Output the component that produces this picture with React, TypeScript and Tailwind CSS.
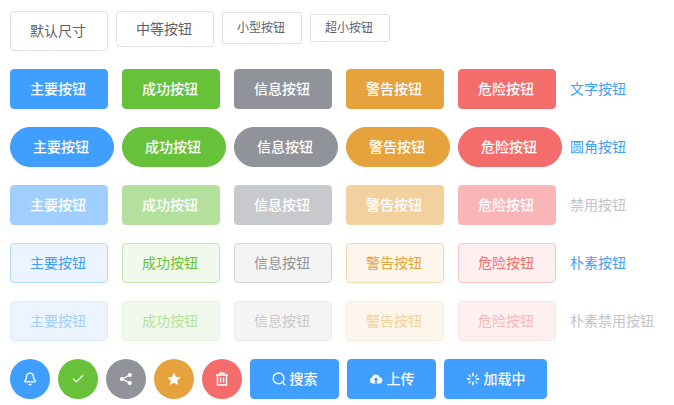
import { Bell, Check } from "lucide-react"

const font = "font-['Inter','Noto_Sans_CJK_SC',sans-serif]"
const base = "inline-flex items-center justify-center text-sm border"

const names = ["主要按钮", "成功按钮", "信息按钮", "警告按钮", "危险按钮"]

const solid = [
  "bg-[#409eff] border-[#409eff] text-white",
  "bg-[#67c23a] border-[#67c23a] text-white",
  "bg-[#909399] border-[#909399] text-white",
  "bg-[#e6a23c] border-[#e6a23c] text-white",
  "bg-[#f56c6c] border-[#f56c6c] text-white",
]
const disabled = [
  "bg-[#a0cfff] border-[#a0cfff] text-white",
  "bg-[#b3e19d] border-[#b3e19d] text-white",
  "bg-[#c8c9cc] border-[#c8c9cc] text-white",
  "bg-[#f3d19e] border-[#f3d19e] text-white",
  "bg-[#fab6b6] border-[#fab6b6] text-white",
]
const plain = [
  "bg-[#ecf5ff] border-[#b3d8ff] text-[#409eff]",
  "bg-[#f0f9eb] border-[#c2e7b0] text-[#67c23a]",
  "bg-[#f4f4f5] border-[#d3d4d6] text-[#909399]",
  "bg-[#fdf6ec] border-[#f5dab1] text-[#e6a23c]",
  "bg-[#fef0f0] border-[#fbc4c4] text-[#f56c6c]",
]
const plainDisabled = [
  "bg-[#ecf5ff] border-[#d9ecff] text-[#a0cfff]",
  "bg-[#f0f9eb] border-[#e1f3d8] text-[#b3e19d]",
  "bg-[#f4f4f5] border-[#e9e9eb] text-[#c8c9cc]",
  "bg-[#fdf6ec] border-[#faecd8] text-[#f3d19e]",
  "bg-[#fef0f0] border-[#fde2e2] text-[#fab6b6]",
]

function Row({ styles, shape, gap, link, linkColor, weight }: { styles: string[]; shape: string; gap: string; link: string; linkColor: string; weight: string }) {
  return (
    <div className={`flex h-10 items-center ${gap}`}>
      {styles.map((s, i) => (
        <button key={names[i]} className={`${base} ${s} ${shape} ${weight} pr-0.5`}>
          {names[i]}
        </button>
      ))}
      <span className={`text-sm ${linkColor}`}>{link}</span>
    </div>
  )
}

function ShareIcon() {
  return (
    <svg width="14" height="14" viewBox="0 0 14 14" fill="white" stroke="white">
      <path d="M10.5 3 3.5 7l7 4" fill="none" strokeWidth="1.3" />
      <circle cx="10.8" cy="3" r="2.1" stroke="none" />
      <circle cx="3" cy="7" r="2.1" stroke="none" />
      <circle cx="10.8" cy="11" r="2.1" stroke="none" />
    </svg>
  )
}

function StarIcon() {
  return (
    <svg width="14" height="14" viewBox="0 0 14 14" fill="white">
      <path d="M7 .6 9 4.8l4.6.6-3.4 3.1.9 4.6L7 10.8l-4.1 2.3.9-4.6L.4 5.4 5 4.8z" />
    </svg>
  )
}

function TrashIcon() {
  return (
    <svg width="14" height="14" viewBox="0 0 14 14" fill="none" stroke="white" strokeWidth="1.4">
      <path d="M1 3h12M5 3V1h4v2M2.5 3v10h9V3M5.5 5.5v5M8.5 5.5v5" />
    </svg>
  )
}

function SearchIcon() {
  return (
    <svg width="14" height="14" viewBox="0 0 14 14" fill="none" stroke="white" strokeWidth="1.3">
      <circle cx="6.6" cy="6.4" r="5.4" />
      <path d="m10.5 10.4 2.3 2.4" strokeLinecap="round" />
    </svg>
  )
}

function UploadIcon() {
  return (
    <svg width="14" height="14" viewBox="0 0 14 14">
      <path fill="white" d="M3.6 11.5A3 3 0 0 1 3.1 5.6 4 4 0 0 1 10.8 5.2 3.2 3.2 0 0 1 10.6 11.5z" />
      <path fill="#409eff" d="M7 5.2 9.6 8H7.9v3.5H6.1V8H4.4z" />
    </svg>
  )
}

function LoadingIcon() {
  const spokes = [0, 45, 90, 135, 180, 225, 270, 315]
  return (
    <svg width="14" height="14" viewBox="0 0 14 14" stroke="white" strokeWidth="1.8">
      {spokes.map((a, i) => (
        <path key={a} d="M7 .8v3.4" transform={`rotate(${a} 7 7)`} opacity={i % 2 ? 0.6 : 0.85} />
      ))}
    </svg>
  )
}

export default function App() {
  return (
    <div className={`${font} w-[674px] h-[405px] overflow-hidden bg-white pl-2.5 pt-[11px] flex flex-col gap-[18px]`}>
      <div className="flex items-start h-10 gap-2">
        <button className="inline-flex items-center justify-center w-[98px] h-10 pr-0.5 rounded border border-[#dcdfe6] text-sm text-[#606266]">默认尺寸</button>
        <button className="inline-flex items-center justify-center w-[98px] h-9 pr-0.5 rounded border border-[#dcdfe6] text-sm text-[#606266]">中等按钮</button>
        <button className="inline-flex items-center justify-center w-20 h-8 mt-px pr-0.5 rounded-[3px] border border-[#dcdfe6] text-xs text-[#606266]">小型按钮</button>
        <button className="inline-flex items-center justify-center w-20 h-7 mt-[3px] pr-0.5 rounded-[3px] border border-[#dcdfe6] text-xs text-[#606266]">超小按钮</button>
      </div>
      <Row styles={solid} shape="w-[98px] h-10 rounded" gap="gap-3.5" weight="font-medium" link="文字按钮" linkColor="text-[#409eff]" />
      <Row styles={solid} shape="w-[104px] h-10 rounded-full" gap="gap-2" weight="font-medium" link="圆角按钮" linkColor="text-[#409eff]" />
      <Row styles={disabled} shape="w-[98px] h-10 rounded" gap="gap-3.5" weight="font-medium" link="禁用按钮" linkColor="text-[#c0c4cc]" />
      <Row styles={plain} shape="w-[98px] h-10 rounded" gap="gap-3.5" weight="font-normal" link="朴素按钮" linkColor="text-[#409eff]" />
      <Row styles={plainDisabled} shape="w-[98px] h-10 rounded" gap="gap-3.5" weight="font-normal" link="朴素禁用按钮" linkColor="text-[#c0c4cc]" />
      <div className="flex items-center h-10 gap-2">
        <span className="w-10 h-10 rounded-full bg-[#409eff] text-white flex items-center justify-center"><Bell size={14} strokeWidth={2.4} /></span>
        <span className="w-10 h-10 rounded-full bg-[#67c23a] text-white flex items-center justify-center"><Check size={14} strokeWidth={2.2} /></span>
        <span className="w-10 h-10 rounded-full bg-[#909399] text-white flex items-center justify-center"><ShareIcon /></span>
        <span className="w-10 h-10 rounded-full bg-[#e6a23c] text-white flex items-center justify-center"><StarIcon /></span>
        <span className="w-10 h-10 rounded-full bg-[#f56c6c] text-white flex items-center justify-center"><TrashIcon /></span>
        <button className={`${base} ${solid[0]} font-medium w-[89px] h-10 rounded gap-1`}><SearchIcon />搜索</button>
        <button className={`${base} ${solid[0]} font-medium w-[89px] h-10 rounded gap-1`}><UploadIcon />上传</button>
        <button className={`${base} ${solid[0]} font-medium w-[103px] h-10 rounded gap-1`}><LoadingIcon />加载中</button>
      </div>
    </div>
  )
}
